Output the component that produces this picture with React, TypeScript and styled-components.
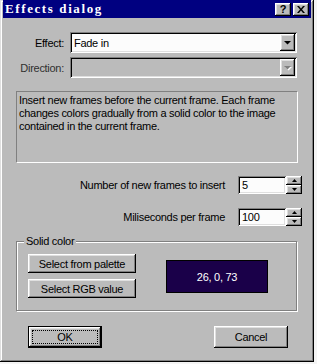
import React from 'react';
import styled, { createGlobalStyle, css } from 'styled-components';

const GlobalStyle = createGlobalStyle`
  html, body {
    margin: 0;
    padding: 0;
    background: #f4f4f4;
  }
  body {
    font-family: "Liberation Sans", Arial, sans-serif;
    font-size: 11px;
    letter-spacing: -0.28px;
    color: #000;
  }
`;

const FACE = '#bbbbbb';

const raised = css`
  box-shadow: inset -1px -1px #000, inset 1px 1px #fff, inset -2px -2px #808080, inset 2px 2px #dfdfdf;
`;

const sunken = css`
  box-shadow: inset 1px 1px #808080, inset -1px -1px #fff, inset 2px 2px #000, inset -2px -2px #dfdfdf;
`;

const Window = styled.div`
  box-sizing: border-box;
  width: 314px;
  height: 362px;
  background: ${FACE};
  padding: 0 3px 3px 3px;
  box-shadow: inset -1px -1px #000, inset 1px 1px #dfdfdf, inset -2px -2px #808080, inset 2px 2px #fff;
  display: flex;
  flex-direction: column;
`;

const TitleBar = styled.div`
  height: 18px;
  background: #000080;
  display: flex;
  align-items: center;
  justify-content: space-between;
  padding: 0 2px;
`;

const Title = styled.span`
  color: #fff;
  font-family: "Liberation Serif", "Times New Roman", serif;
  font-weight: bold;
  font-size: 13px;
  letter-spacing: 1.6px;
  line-height: 18px;
`;

const CaptionButtons = styled.div`
  display: flex;
  gap: 2px;
`;

const CaptionButton = styled.div`
  width: 16px;
  height: 13px;
  background: ${FACE};
  ${raised};
  display: flex;
  align-items: center;
  justify-content: center;
  font-weight: bold;
  font-size: 11px;
  line-height: 13px;
`;

const FormGrid = styled.div`
  display: grid;
  grid-template-columns: 58px 227px;
  grid-auto-rows: 21px;
  column-gap: 6px;
  row-gap: 4px;
  margin: 14px 0 0 3px;
`;

const Label = styled.label<{ disabled?: boolean }>`
  display: flex;
  align-items: center;
  justify-content: flex-end;
  color: ${({ disabled }) => (disabled ? '#303030' : '#000')};
`;

const Combo = styled.div<{ disabled?: boolean }>`
  box-sizing: border-box;
  background: ${({ disabled }) => (disabled ? FACE : '#fcfcfc')};
  ${sunken};
  padding: 2px;
  display: flex;
  align-items: stretch;
`;

const ComboText = styled.span`
  flex: 1;
  display: flex;
  align-items: center;
  padding-left: 2px;
`;

const DropButton = styled.div`
  width: 15px;
  background: ${FACE};
  ${raised};
  display: flex;
  align-items: center;
  justify-content: center;
`;

const Description = styled.div`
  box-sizing: border-box;
  width: 282px;
  height: 72px;
  margin: 13px 0 0 13px;
  padding: 2px 2px;
  line-height: 13px;
  border-top: 1px solid #808080;
  border-left: 1px solid #808080;
  border-right: 1px solid #fff;
  border-bottom: 1px solid #fff;
`;

const SpinRow = styled.div<{ top: number }>`
  display: flex;
  justify-content: flex-end;
  align-items: center;
  gap: 13px;
  height: 18px;
  margin-top: ${({ top }) => top}px;
  padding-right: 9px;
`;

const Spin = styled.div`
  display: flex;
  height: 18px;
`;

const SpinInput = styled.div`
  box-sizing: border-box;
  width: 48px;
  background: #fcfcfc;
  ${sunken};
  padding: 0 4px;
  display: flex;
  align-items: center;
`;

const SpinButtons = styled.div`
  display: flex;
  flex-direction: column;
  width: 16px;
`;

const SpinButton = styled.div`
  flex: 1;
  background: ${FACE};
  ${raised};
  display: flex;
  align-items: center;
  justify-content: center;
`;

const GroupBox = styled.div`
  position: relative;
  box-sizing: border-box;
  width: 281px;
  height: 70px;
  margin: 15px 0 0 13px;
  padding: 12px 0 0 11px;
  border: 1px solid #808080;
  box-shadow: 1px 1px 0 #fff, inset 1px 1px 0 #fff;
  display: flex;
  align-items: flex-start;
  gap: 30px;
`;

const GroupLegend = styled.span`
  position: absolute;
  top: -7px;
  left: 7px;
  padding: 0 2px;
  background: ${FACE};
  line-height: 13px;
`;

const ButtonColumn = styled.div`
  display: flex;
  flex-direction: column;
  gap: 6px;
`;

const Button = styled.button<{ w: number; h: number; isDefault?: boolean }>`
  position: relative;
  box-sizing: border-box;
  width: ${({ w }) => w}px;
  height: ${({ h }) => h}px;
  padding: 0;
  border: none;
  background: ${FACE};
  font-family: "Liberation Sans", Arial, sans-serif;
  font-size: 11px;
  letter-spacing: -0.28px;
  color: #000;
  ${raised};
  ${({ isDefault }) =>
    isDefault &&
    css`
      box-shadow: inset 0 0 0 1px #000, inset -2px -2px #000, inset 2px 2px #fff, inset -3px -3px #808080, inset 3px 3px #dfdfdf;
      &::after {
        content: '';
        position: absolute;
        inset: 4px;
        border: 1px dotted #000;
      }
    `}
`;

const Swatch = styled.div<{ color: string }>`
  box-sizing: border-box;
  width: 102px;
  height: 33px;
  margin-top: 6px;
  background: ${({ color }) => color};
  border: 1px solid #000;
  color: #fff;
  display: flex;
  align-items: center;
  justify-content: center;
`;

const Footer = styled.div`
  display: flex;
  justify-content: space-between;
  margin-top: 15px;
  padding: 0 23px 0 25px;
`;

const DownArrow = ({ disabled }: { disabled?: boolean }) => (
  <svg width="9" height="6" viewBox="0 0 9 6">
    {disabled && <path d="M2 2h7L5.5 5.5z" fill="#fff" />}
    <path d="M1 1h7L4.5 4.5z" fill={disabled ? '#808080' : '#000'} />
  </svg>
);

const TinyArrow = ({ up }: { up?: boolean }) => (
  <svg width="5" height="3" viewBox="0 0 5 3">
    <path d={up ? 'M2.5 0L5 3H0z' : 'M0 0h5L2.5 3z'} fill="#000" />
  </svg>
);

const SpinBox = ({ value }: { value: string }) => (
  <Spin>
    <SpinInput>{value}</SpinInput>
    <SpinButtons>
      <SpinButton>
        <TinyArrow up />
      </SpinButton>
      <SpinButton>
        <TinyArrow />
      </SpinButton>
    </SpinButtons>
  </Spin>
);

const App = () => {
  const rgb = [26, 0, 73];
  return (
    <>
      <GlobalStyle />
      <Window>
        <TitleBar>
          <Title>Effects dialog</Title>
          <CaptionButtons>
            <CaptionButton>?</CaptionButton>
            <CaptionButton>
              <svg width="8" height="7" viewBox="0 0 8 7">
                <path d="M0 0h2l2 2.5L6 0h2L5 3.5 8 7H6L4 4.5 2 7H0l3-3.5z" fill="#000" />
              </svg>
            </CaptionButton>
          </CaptionButtons>
        </TitleBar>

        <FormGrid>
          <Label>Effect:</Label>
          <Combo>
            <ComboText>Fade in</ComboText>
            <DropButton>
              <DownArrow />
            </DropButton>
          </Combo>
          <Label disabled>Direction:</Label>
          <Combo disabled>
            <ComboText />
            <DropButton>
              <DownArrow disabled />
            </DropButton>
          </Combo>
        </FormGrid>

        <Description>
          Insert new frames before the current frame. Each frame changes colors gradually from a solid
          color to the image contained in the current frame.
        </Description>

        <SpinRow top={13}>
          <span>Number of new frames to insert</span>
          <SpinBox value="5" />
        </SpinRow>
        <SpinRow top={14}>
          <span>Miliseconds per frame</span>
          <SpinBox value="100" />
        </SpinRow>

        <GroupBox>
          <GroupLegend>Solid color</GroupLegend>
          <ButtonColumn>
            <Button w={108} h={19}>Select from palette</Button>
            <Button w={108} h={19}>Select RGB value</Button>
          </ButtonColumn>
          <Swatch color={`rgb(${rgb.join(',')})`}>{rgb.join(', ')}</Swatch>
        </GroupBox>

        <Footer>
          <Button w={74} h={22} isDefault>OK</Button>
          <Button w={74} h={22}>Cancel</Button>
        </Footer>
      </Window>
    </>
  );
};

export default App;
